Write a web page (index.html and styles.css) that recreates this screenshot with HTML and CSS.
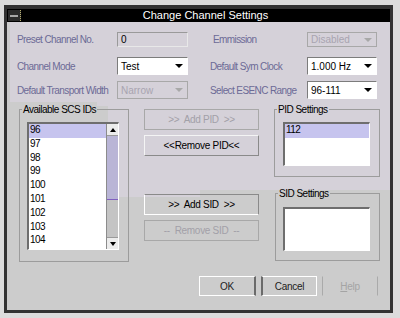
FILE: index.html
```html
<!DOCTYPE html>
<html lang="en">
<head>
<title>Change Channel Settings</title>
<link rel="stylesheet" href="styles.css">
</head>
<body>
<div class="window">
  <div class="titlebar">
    <span class="sysmenu"><span class="sysbar"></span></span>
    <span class="title">Change Channel Settings</span>
  </div>
  <div class="content">
    <div class="form-row row1">
      <span class="label">Preset Channel No.</span>
      <span class="field text">0</span>
      <span class="label right">Emmission</span>
      <span class="field combo disabled narrow">Disabled<i class="arrow"></i></span>
    </div>
    <div class="form-row row2">
      <span class="label">Channel Mode</span>
      <span class="field combo">Test<i class="arrow"></i></span>
      <span class="label right">Default Sym Clock</span>
      <span class="field combo narrow">1.000 Hz<i class="arrow"></i></span>
    </div>
    <div class="form-row row3">
      <span class="label">Default Transport Width</span>
      <span class="field combo disabled">Narrow<i class="arrow"></i></span>
      <span class="label right">Select ESENC Range</span>
      <span class="field combo narrow">96-111<i class="arrow"></i></span>
    </div>

    <div class="middle">
      <fieldset class="group scs">
        <legend>Available SCS IDs</legend>
        <div class="listbox scs-list">
          <div class="items">
            <div class="item selected">96</div>
            <div class="item">97</div>
            <div class="item">98</div>
            <div class="item">99</div>
            <div class="item">100</div>
            <div class="item">101</div>
            <div class="item">102</div>
            <div class="item">103</div>
            <div class="item">104</div>
          </div>
          <div class="scrollbar">
            <span class="sb-btn"><i class="up"></i></span>
            <span class="sb-thumb"></span>
            <span class="sb-track"></span>
            <span class="sb-btn"><i class="down"></i></span>
          </div>
        </div>
      </fieldset>

      <div class="actions">
        <div class="btn off">&gt;&gt;  Add PID  &gt;&gt;</div>
        <div class="btn plain">&lt;&lt;Remove PID&lt;&lt;</div>
        <div class="btn raised gap">&gt;&gt;  Add SID  &gt;&gt;</div>
        <div class="btn off">--  Remove SID  --</div>
      </div>

      <div class="settings">
        <fieldset class="group pid">
          <legend>PID Settings</legend>
          <div class="listbox small">
            <div class="items">
              <div class="item selected">112</div>
            </div>
          </div>
        </fieldset>
        <fieldset class="group sid">
          <legend>SID Settings</legend>
          <div class="listbox small">
            <div class="items"></div>
          </div>
        </fieldset>
      </div>
    </div>

    <div class="footer">
      <div class="btn ok">OK</div>
      <div class="btn cancel">Cancel</div>
      <div class="btn help"><u>H</u>elp</div>
    </div>
  </div>
</div>
</body>
</html>
```

FILE: styles.css
```css
body {
    margin: 0;
    background: #dcdcdc;
    font-family: "Liberation Sans", Arial, sans-serif;
}
.window {
    margin: 5px 0 0 4px;
    width: 389px;
    box-sizing: border-box;
    border: 3px solid #333;
    border-top-width: 4px;
}
.titlebar {
    display: flex;
    align-items: center;
    height: 13px;
    background: #000;
}
.sysmenu {
    display: flex;
    align-items: center;
    justify-content: center;
    width: 12px;
    height: 11px;
    margin-left: 1px;
    background: #2c2c2c;
    border-right: 1px dotted #b8b070;
}
.sysbar {
    width: 8px;
    height: 2px;
    background: #a8a8a8;
}
.title {
    flex: 1;
    text-align: center;
    color: #fff;
    font-size: 11px;
    line-height: 13px;
}
.content {
    height: 288px;
    background:
        linear-gradient(#d5d1d9, #d5d1d9) 3px 0 / 380px 80px no-repeat,
        linear-gradient(#d5d1d9, #d5d1d9) 90px 76px / 11px 8px no-repeat,
        linear-gradient(#d5d1d9, #d5d1d9) 101px 80px / 92px 95px no-repeat,
        linear-gradient(#d5d1d9, #d5d1d9) 193px 80px / 190px 88px no-repeat,
        #cccccc;
}

/* top form */
.form-row {
    display: flex;
    align-items: center;
    padding-left: 10px;
}
.row1 { height: 15px; padding-top: 10px; }
.row2 { height: 18px; margin-top: 10px; }
.row3 { height: 18px; margin-top: 6px; }
.label {
    width: 100px;
    font-size: 10px;
    letter-spacing: -0.6px;
    color: #6c6a96;
    white-space: nowrap;
}
.label.right {
    width: 97px;
    margin-left: 22px;
}
.row1 .label.right { padding-left: 3px; width: 94px; }
.field {
    box-sizing: border-box;
    width: 71px;
    height: 100%;
    display: flex;
    align-items: center;
    justify-content: space-between;
    padding: 0 4px 0 3px;
    font-size: 10px;
    border: 1px solid #fff;
    border-top-color: #7c7c7c;
    border-left-color: #7c7c7c;
    background: #fff;
    color: #000;
}
.field.narrow { width: 70px; }
.field.text {
    background: transparent;
    border-color: #9a9a9a;
    border-bottom-color: #e8e8e8;
    border-right-color: #e8e8e8;
}
.field.disabled {
    background: transparent;
    color: #a8a4b0;
    border-color: #a8a8a8;
}
.arrow {
    width: 0;
    height: 0;
    border-left: 4px solid transparent;
    border-right: 4px solid transparent;
    border-top: 4px solid #000;
}
.disabled .arrow { border-top-color: #a8a8a8; }

/* middle */
.middle {
    display: flex;
    align-items: flex-start;
    margin-top: 5px;
}
fieldset.group {
    margin: 0;
    padding: 0;
    min-width: 0;
    box-sizing: border-box;
    border: 1px solid #9c9c9c;
}
fieldset.group legend {
    margin-left: 2px;
    padding: 0 1px;
    font-size: 10px;
    letter-spacing: -0.5px;
    line-height: 11px;
    color: #000;
}
fieldset.scs {
    width: 110px;
    margin-left: 12px;
}
.listbox {
    display: flex;
    box-sizing: border-box;
    background: #fff;
    border: 2px solid #6e6e6e;
    border-right: 1px solid #fff;
    border-bottom: 1px solid #fff;
}
.scs-list {
    width: 92px;
    height: 128px;
    margin: 7px 9px 11px 7px;
}
.items {
    flex: 1;
    overflow: hidden;
}
.item {
    height: 13.8px;
    line-height: 12px;
    padding-left: 1px;
    font-size: 10px;
    letter-spacing: -0.6px;
    color: #000;
}
.item.selected { background: #c6c4ee; }
.scrollbar {
    width: 11px;
    display: flex;
    flex-direction: column;
    border-left: 1px solid #8c8c8c;
}
.sb-btn {
    height: 11px;
    display: flex;
    align-items: center;
    justify-content: center;
    background: #ececec;
    border-bottom: 1px solid #9a9a9a;
}
.sb-btn:last-child {
    border-bottom: 0;
    border-top: 1px solid #9a9a9a;
}
.sb-btn i {
    width: 0;
    height: 0;
    border-left: 3px solid transparent;
    border-right: 3px solid transparent;
}
.sb-btn .up { border-bottom: 4px solid #000; }
.sb-btn .down { border-top: 4px solid #000; }
.sb-thumb {
    height: 63px;
    background: #b9b5d6;
    border-bottom: 1px solid #8060c0;
}
.sb-track {
    flex: 1;
    background: #c4c4c4;
}

.actions {
    width: 115px;
    margin-left: 15px;
    padding-top: 5px;
    display: flex;
    flex-direction: column;
    gap: 5px;
}
.btn {
    box-sizing: border-box;
    height: 21px;
    display: flex;
    align-items: center;
    justify-content: center;
    font-size: 10px;
    letter-spacing: -0.3px;
    white-space: pre;
    color: #000;
    border: 1px solid transparent;
}
.btn.gap { margin-top: 33px; }
.btn.off {
    color: #a2a0a8;
    border-color: #a8a8a8;
}
.btn.plain {
    border-color: #8a8a8a;
    border-top-color: #f4f4f4;
    border-left-color: #f4f4f4;
}
.btn.raised {
    border-color: #8a8a8a;
    border-left-color: #fff;
    border-bottom-color: #fff;
}

.settings {
    margin-left: 15px;
    width: 106px;
}
fieldset.pid { width: 106px; }
fieldset.sid {
    width: 105px;
    margin: 11px 0 0 1px;
}
.listbox.small {
    width: 87px;
    height: 44px;
}
.pid .listbox.small { margin: 7px 0 10px 8px; }
.sid .listbox.small { margin: 8px 0 9px 7px; }

/* bottom buttons */
.footer {
    display: flex;
    justify-content: flex-end;
    gap: 5px;
    margin-top: 14px;
    padding-right: 12px;
}
.footer .btn {
    width: 56px;
    height: 20px;
    color: #222;
}
.footer .btn.ok {
    width: 57px;
    border-color: #fff;
    border-right: 2px solid #6a6a6a;
}
.footer .btn.cancel {
    border-color: #fff;
    border-left: 2px solid #6a6a6a;
}
.footer .btn.help {
    color: #a4a4a4;
    border-color: transparent #aaa;
}
```
